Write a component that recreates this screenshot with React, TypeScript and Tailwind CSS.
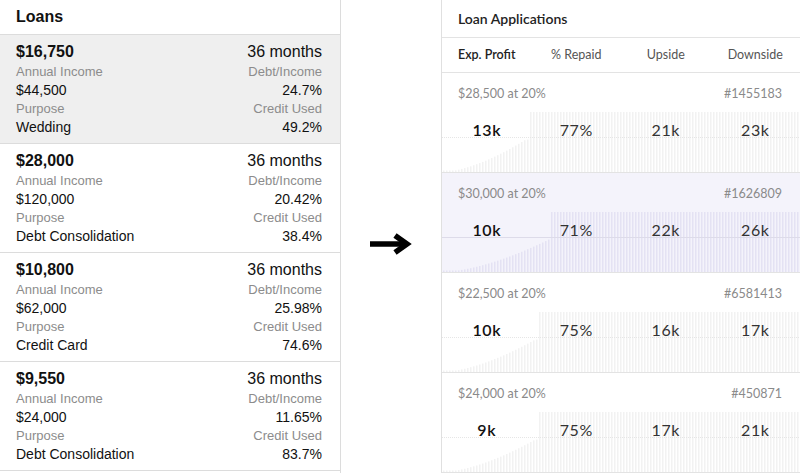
import React from 'react';

interface Loan {
  amount: string;
  term: string;
  income: string;
  dti: string;
  purpose: string;
  creditUsed: string;
}

interface Application {
  principal: string;
  id: string;
  profit: string;
  repaid: string;
  upside: string;
  downside: string;
  jump: number;
}

const loans: Loan[] = [
  { amount: '$16,750', term: '36 months', income: '$44,500', dti: '24.7%', purpose: 'Wedding', creditUsed: '49.2%' },
  { amount: '$28,000', term: '36 months', income: '$120,000', dti: '20.42%', purpose: 'Debt Consolidation', creditUsed: '38.4%' },
  { amount: '$10,800', term: '36 months', income: '$62,000', dti: '25.98%', purpose: 'Credit Card', creditUsed: '74.6%' },
  { amount: '$9,550', term: '36 months', income: '$24,000', dti: '11.65%', purpose: 'Debt Consolidation', creditUsed: '83.7%' },
];

const applications: Application[] = [
  { principal: '$28,500 at 20%', id: '#1455183', profit: '13k', repaid: '77%', upside: '21k', downside: '23k', jump: 87 },
  { principal: '$30,000 at 20%', id: '#1626809', profit: '10k', repaid: '71%', upside: '22k', downside: '26k', jump: 109 },
  { principal: '$22,500 at 20%', id: '#6581413', profit: '10k', repaid: '75%', upside: '16k', downside: '17k', jump: 96 },
  { principal: '$24,000 at 20%', id: '#450871', profit: '9k', repaid: '75%', upside: '17k', downside: '21k', jump: 96 },
];

function LoanRow({ loan, active }: { loan: Loan; active: boolean }) {
  return (
    <div className={`px-4 pr-[18px] pt-[6px] pb-[6px] border-b border-[#dcdcdc] ${active ? 'bg-[#efefef]' : 'bg-white'}`}>
      <div className="flex justify-between text-[16px] leading-[22px] text-[#111]">
        <span className="font-bold">{loan.amount}</span>
        <span>{loan.term}</span>
      </div>
      <div className="flex justify-between text-[13px] leading-[18px] text-[#8c8c8c]">
        <span>Annual Income</span>
        <span>Debt/Income</span>
      </div>
      <div className="flex justify-between text-[14px] leading-[19px] text-[#111]">
        <span>{loan.income}</span>
        <span>{loan.dti}</span>
      </div>
      <div className="flex justify-between text-[13px] leading-[18px] text-[#8c8c8c]">
        <span>Purpose</span>
        <span>Credit Used</span>
      </div>
      <div className="flex justify-between text-[14px] leading-[19px] text-[#111]">
        <span>{loan.purpose}</span>
        <span>{loan.creditUsed}</span>
      </div>
    </div>
  );
}

// histogram behind the numbers: slow rise, then a jump to full height
function Histogram({ jump, active }: { jump: number; active: boolean }) {
  const bars: React.ReactNode[] = [];
  const ramp = jump - 8;
  for (let x = 1; x < 358; x += 3) {
    let h = 60;
    if (x < jump) {
      h = Math.max(1.5, 30 * Math.pow(Math.min(x / ramp, 1.05), 1.6));
    }
    bars.push(<rect key={x} x={x} y={60 - h} width={1.5} height={h} />);
  }
  return (
    <svg width="358" height="60" viewBox="0 0 358 60" className="absolute left-0 bottom-0">
      <g fill={active ? '#e4e2f3' : '#f2f2f2'}>{bars}</g>
      <line x1="0" x2="358" y1="25.5" y2="25.5" stroke={active ? '#dddbe9' : '#e6e6e6'} strokeWidth="1" strokeDasharray={active ? undefined : '1 1'} />
    </svg>
  );
}

function ApplicationCard({ app, active }: { app: Application; active: boolean }) {
  return (
    <div className={`relative h-[100px] border-b border-[#e3e3e3] overflow-hidden ${active ? 'bg-[#f4f3fb]' : 'bg-white'}`}>
      <Histogram jump={app.jump} active={active} />
      <div className="relative flex justify-between pl-4 pr-[18px] pt-[14px] text-[12.5px] leading-[14px] text-[#8a8a8a]">
        <span>{app.principal}</span>
        <span>{app.id}</span>
      </div>
      <div className="relative grid grid-cols-4 mt-[19px] text-center text-[16px] tracking-[0.6px] leading-[20px] text-[#333]">
        <span className="font-semibold text-[#111]">{app.profit}</span>
        <span>{app.repaid}</span>
        <span>{app.upside}</span>
        <span>{app.downside}</span>
      </div>
    </div>
  );
}

export default function App() {
  return (
    <div className="flex w-[800px] h-[473px] bg-white overflow-hidden">
      <div className="w-[341px] shrink-0 border-r border-[#dcdcdc] font-['Liberation_Sans',Arial,sans-serif]">
        <div className="h-[35px] px-4 pt-[7px] border-b border-[#dcdcdc] text-[16px] leading-[20px] font-bold text-[#111]">
          Loans
        </div>
        {loans.map((loan, i) => (
          <LoanRow key={loan.amount} loan={loan} active={i === 0} />
        ))}
      </div>

      <div className="w-[100px] shrink-0 flex items-center justify-center pt-[14px]">
        <svg width="42" height="22" viewBox="0 0 42 22">
          <line x1="0" y1="11" x2="36" y2="11" stroke="#000" strokeWidth="5.5" />
          <polyline points="25,2.5 37,11 25,19.5" fill="none" stroke="#000" strokeWidth="5.5" strokeLinejoin="miter" />
        </svg>
      </div>

      <div className="flex-1 border-l border-[#e0e0e0] font-['Lato','Open_Sans',sans-serif]">
        <div className="h-[38px] pl-4 pt-[10px] border-b border-[#e3e3e3] text-[14px] leading-[18px] font-semibold text-[#222]">
          Loan Applications
        </div>
        <div className="grid grid-cols-4 h-[35px] items-center text-center text-[12.5px] border-b border-[#e3e3e3] text-[#555]">
          <span className="font-semibold text-[#222]">Exp. Profit</span>
          <span>% Repaid</span>
          <span>Upside</span>
          <span>Downside</span>
        </div>
        {applications.map((app, i) => (
          <ApplicationCard key={app.id} app={app} active={i === 1} />
        ))}
      </div>
    </div>
  );
}
